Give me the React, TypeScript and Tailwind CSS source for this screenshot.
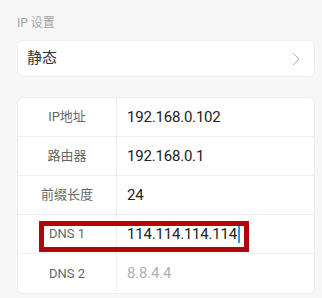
import React from "react";

type Row = {
  label: string;
  value: string;
  placeholder?: boolean;
  focused?: boolean;
};

const ROWS: Row[] = [
  { label: "IP地址", value: "192.168.0.102" },
  { label: "路由器", value: "192.168.0.1" },
  { label: "前缀长度", value: "24" },
  { label: "DNS 1", value: "114.114.114.114", focused: true },
  { label: "DNS 2", value: "8.8.4.4", placeholder: true },
];

const font = "font-['Roboto','Noto_Sans_CJK_SC',sans-serif]";

export default function App() {
  return (
    <div className={`h-[298px] w-[322px] overflow-hidden bg-[#f7f7f7] pl-[17px] pr-[7px] ${font}`}>
      <p className="pt-[15px] text-[12px] leading-[16px] text-[#a3a3a3]">IP 设置</p>

      <div className="mt-[9px] flex h-[37px] items-center justify-between rounded-[6px] border border-[#ededed] bg-white pl-[9px] pr-[14px]">
        <span className="text-[15px] text-[#333333]">静态</span>
        <svg width="8" height="14" viewBox="0 0 8 14" fill="none">
          <path d="M1 1l6 6-6 6" stroke="#b5b5b5" strokeWidth="1" />
        </svg>
      </div>

      <div className="mt-[20px] overflow-hidden rounded-[6px] border border-[#ededed] bg-white">
        {ROWS.map((row, i) => (
          <div
            key={row.label}
            className={`relative flex h-[39px] items-center ${i < ROWS.length - 1 ? "border-b border-[#efefef]" : ""}`}
          >
            <div className="flex h-full w-[99px] shrink-0 items-center justify-center border-r border-[#efefef] text-[13px] text-[#666666]">
              {row.label}
            </div>
            <div
              className={`flex items-center pl-[10px] text-[15px] tracking-[-0.2px] ${row.placeholder ? "text-[#b0b0b0]" : "text-[#222222]"}`}
            >
              {row.value}
              {row.focused ? <span className="ml-[1px] h-[18px] w-[1.5px] bg-[#3b8fe6]" /> : null}
            </div>
            {row.focused ? (
              <div className="pointer-events-none absolute left-[21px] top-[6px] h-[31px] w-[210px] border-[5px] border-[#b2040c]" />
            ) : null}
          </div>
        ))}
      </div>
    </div>
  );
}
